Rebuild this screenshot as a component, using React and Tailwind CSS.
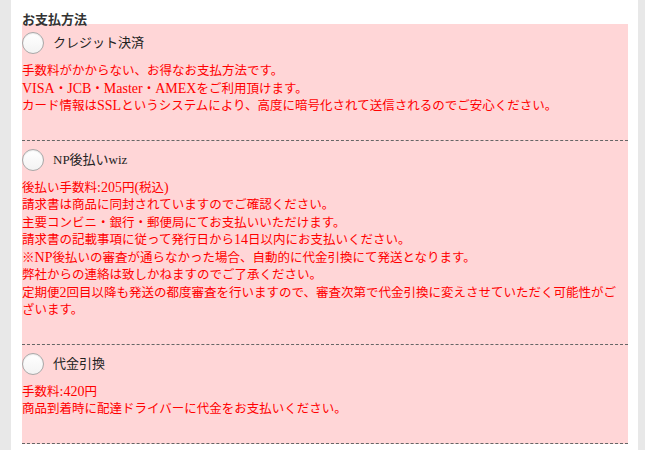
const methods = [
    {
        name: "クレジット決済",
        lines: [
            "手数料がかからない、お得なお支払方法です。",
            "VISA・JCB・Master・AMEXをご利用頂けます。",
            "カード情報はSSLというシステムにより、高度に暗号化されて送信されるのでご安心ください。",
        ],
    },
    {
        name: "NP後払いwiz",
        lines: [
            "後払い手数料:205円(税込)",
            "請求書は商品に同封されていますのでご確認ください。",
            "主要コンビニ・銀行・郵便局にてお支払いいただけます。",
            "請求書の記載事項に従って発行日から14日以内にお支払いください。",
            "※NP後払いの審査が通らなかった場合、自動的に代金引換にて発送となります。",
            "弊社からの連絡は致しかねますのでご了承ください。",
            "定期便2回目以降も発送の都度審査を行いますので、審査次第で代金引換に変えさせていただく可能性がございます。",
        ],
    },
    {
        name: "代金引換",
        lines: [
            "手数料:420円",
            "商品到着時に配達ドライバーに代金をお支払いください。",
        ],
    },
];

// latin runs read a little larger than the kana in the original
function Line({ text }) {
    return (
        <div>
            {text.split(/([A-Za-z0-9:().]+)/).map((part, i) =>
                i % 2 ? <span key={i} className="text-[14px] leading-none">{part}</span> : part
            )}
        </div>
    );
}

function Radio() {
    return (
        <span className="block w-[22px] h-[22px] shrink-0 rounded-full border border-[#a8a8a8] bg-gradient-to-b from-white to-[#f3f3f3] shadow-[inset_0_1px_1px_rgba(0,0,0,0.08)]" />
    );
}

function Method({ name, lines }) {
    return (
        <div className="pt-2 pb-6 border-b border-dashed border-[#666]">
            <label className="flex items-center gap-[9px] h-[22px] text-[13px] text-[#222]">
                <Radio />
                <span>{name}</span>
            </label>
            <div className="mt-[9px] pr-2 text-[12.5px] leading-[17.5px] text-[#ff0000]">
                {lines.map((line, i) => (
                    <Line key={i} text={line} />
                ))}
            </div>
        </div>
    );
}

export default function App() {
    return (
        <div
            className="flex min-h-[450px] bg-white"
            style={{ fontFamily: '"Liberation Serif", "Noto Sans CJK JP", serif' }}
        >
            <div className="w-[11px] bg-[#e8e8e8]" />
            <div className="flex-1 pl-[11px] pr-[10px]">
                <div className="h-[24px] pt-[13px] text-[13px] leading-[13px] font-bold text-[#333]">お支払方法</div>
                <div className="bg-[#ffd6d7]">
                    {methods.map(m => (
                        <Method key={m.name} {...m} />
                    ))}
                </div>
            </div>
            <div className="w-[7px] bg-[#e8e8e8]" />
            <div className="w-[5px]" />
        </div>
    );
}
